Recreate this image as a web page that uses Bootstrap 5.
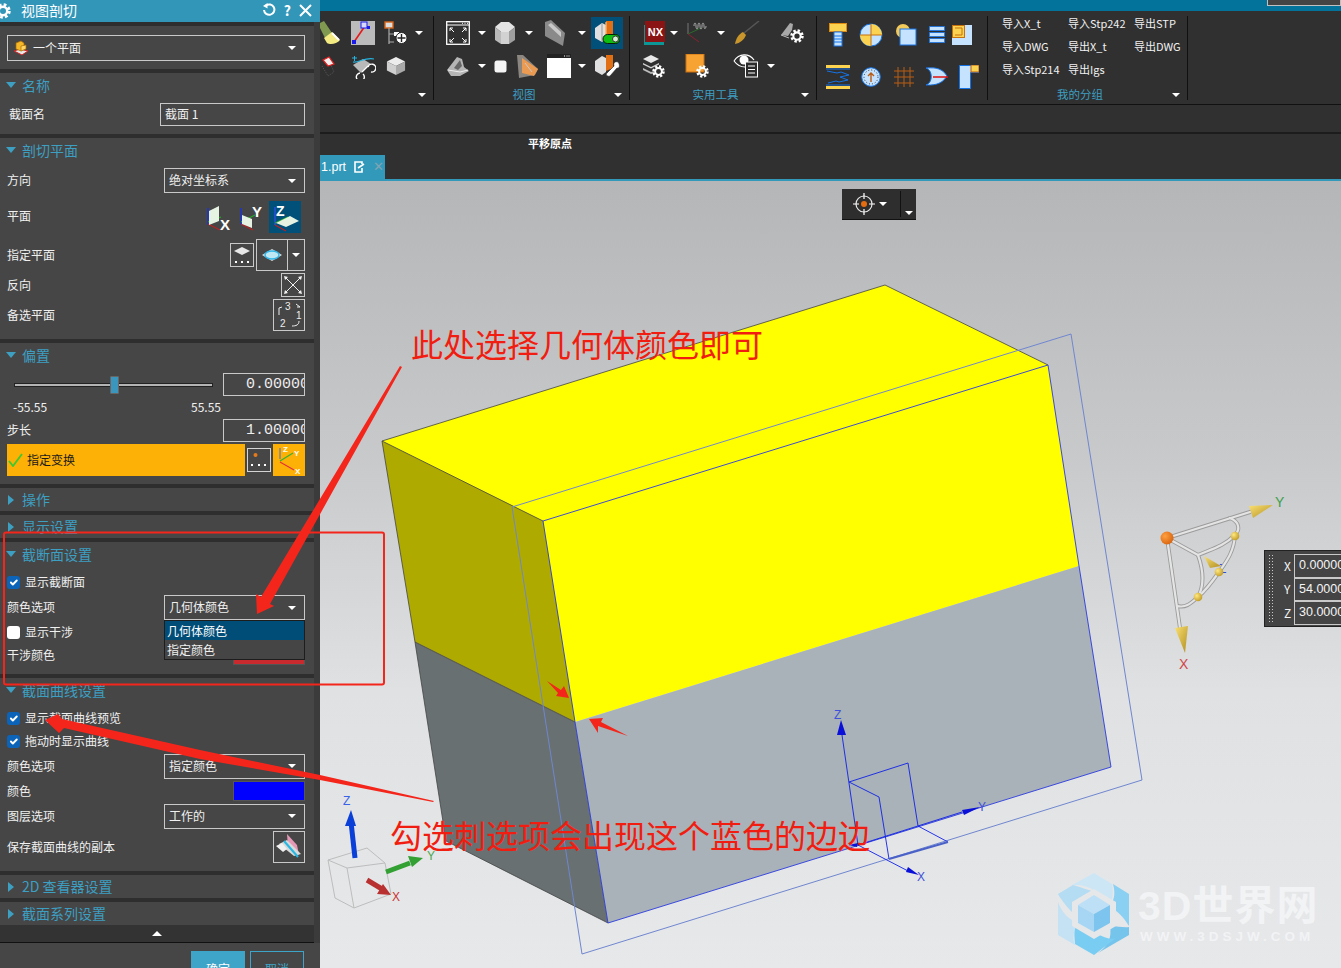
<!DOCTYPE html>
<html lang="zh-CN">
<head>
    <meta charset="UTF-8">
    <title>视图剖切</title>
    <link href="https://cdn.jsdelivr.net/npm/bootstrap@5.3.0/dist/css/bootstrap.min.css" rel="stylesheet">
    <style>
        body { height: 968px; overflow: hidden; background: #2e2e2e; color: #f0f0f0; font: 12px/1.2 "Noto Sans CJK SC", "Liberation Sans", sans-serif; }
        .app { width: 1341px; height: 968px; overflow: hidden; }
        /* left dialog */
        .dlg { width: 320px; flex-shrink: 0; background: #2e2e2e; border-right: 6px solid #3b3b3b; }
        .dlg > * { flex-shrink: 0; }
        .dlg-title { height: 22px; margin-right: -6px; background: #3296b9; font-size: 14px; color: #fff; padding-left: 21px; padding-bottom: 1px; }
        .dlg-gear { left: -6px; top: 3px; }
        .grp { background: #464646; padding: 0 9px 0 7px; flex-shrink: 0; }
        .g1 { height: 43px; padding-top: 9px; }
        .g2 { height: 61px; }
        .g3 { height: 201px; }
        .g4 { height: 141px; }
        .gc { height: 23px; }
        .g5 { height: 132px; }
        .g6 { height: 193px; }
        .gh { height: 26px; font-size: 14px; color: #3d9fc2; margin-left: -7px; padding-bottom: 2px; }
        .gc .gh { height: 23px; padding-bottom: 0; }
        .tr-cell { width: 22px; }
        .tri-d { width: 0; height: 0; border: 5px solid transparent; border-top: 6px solid #3d9fc2; border-bottom: 0; }
        .tri-r { width: 0; height: 0; border: 5px solid transparent; border-left: 6px solid #3d9fc2; border-right: 0; }
        .rw { display: flex; align-items: center; justify-content: space-between; }
        .r14 { height: 14px; } .r18 { height: 18px; } .r20 { height: 20px; } .r22 { height: 22px; } .r23 { height: 23px; }
        .r26 { height: 26px; } .r28 { height: 28px; } .r30 { height: 30px; } .r31 { height: 31px; } .r32 { height: 32px; }
        .r33 { height: 33px; } .r38 { height: 38px; } .r39 { height: 39px; }
        .lbl-in { padding-left: 2px; }
        .sel { flex-shrink: 0; height: 25px; width: 141px; border: 1px solid #c9c9c9; padding: 0 4px; }
        .sel-wide { width: 298px; height: 26px; padding-left: 5px; }
        .inp { height: 23px; width: 145px; border: 1px solid #c9c9c9; padding: 0 4px; }
        .num { width: 82px; height: 23px; border: 1px solid #c9c9c9; font: 15px/21px "Liberation Mono", monospace; overflow: hidden; white-space: nowrap; padding-left: 22px; color: #eee; }
        .step-row { padding-top: 3px; }
        .cr { width: 0; height: 0; border: 4px solid transparent; border-top: 4px solid #fff; border-bottom: 0; display: inline-block; }
        .opt-menu { --bs-dropdown-min-width: 0; top: 24px; left: -1px; width: 141px; padding: 0; margin: 0; background: #454545; border: 1px solid #1d1d1d; border-radius: 0; font-size: 12px; }
        .opt-menu .dropdown-item { color: #f0f0f0; padding: 0 0 0 2px; height: 19px; line-height: 19px; }
        .opt-menu .dropdown-item.active { background: #004e78; color: #fff; }
        .ib { border: 1px solid #c9c9c9; }
        .ib24 { width: 24px; height: 24px; }
        .ib32 { width: 32px; height: 32px; }
        .ib-plane { width: 49px; height: 32px; }
        .ib-side { width: 17px; height: 30px; border-left: 1px solid #c9c9c9; }
        .ib-main { width: 31px; }
        .ic-sel { background: #00507a; width: 32px; height: 32px; }
        .pl-gap { gap: 2px; }
        .range-wrap { width: 199px; margin-left: 7px; }
        .nx-range { height: 18px; display: block; }
        .nx-range::-webkit-slider-runnable-track { height: 4px; background: #b4b4b4; border: 1px solid #222; border-radius: 0; }
        .nx-range::-webkit-slider-thumb { width: 9px; height: 18px; margin-top: -8px; background: #3a96bc; border: 1px solid #666; border-radius: 1px; }
        .rng-lbl { padding: 0 84px 0 6px; }
        .req { height: 32px; background: #fdb005; color: #1b1b1b; }
        .req-main { width: 238px; }
        .req-ck { margin: 0 4px 0 1px; flex-shrink: 0; }
        .req-btn { width: 24px; height: 24px; border: 1px solid #d4d4d4; background: #464646; }
        .req-axes { width: 32px; height: 32px; background: #fdb005; }
        .chk { width: 13px; height: 13px; margin: 0 5px 0 0; border-radius: 3px; background-color: #fff; border: 0; flex-shrink: 0; }
        .chk:checked { background-color: #0c64b8; }
        .swatch { width: 72px; height: 20px; border: 1px solid #555; }
        .sw-red { background: #c92a2e; }
        .sw-blue { background: #0000ff; }
        .more-bar { height: 18px; background: #333; border-bottom: 1px solid #111; }
        .tri-u { width: 0; height: 0; border: 5px solid transparent; border-bottom: 5px solid #fff; border-top: 0; }
        .dlg-foot { padding: 8px 16px 0 0; gap: 5px; background: #464646; flex-grow: 1; margin-right: -6px; }
        .nx-btn { width: 54px; height: 30px; border-radius: 0; font-size: 12px; padding: 6px 0 0; color: #3fa5c8; border: 1px solid #3fa5c8; background: transparent; }
        .nx-btn-on { background: #3fa5c8; color: #fff; }
        /* ribbon */
        .main-col { width: 1021px; }
        .top-strip { height: 11px; background: #04739c; }
        .top-box { right: 0; top: -1px; width: 74px; height: 7px; border: 1px solid #c0c0c0; background: #444; }
        .ribbon { height: 93px; background: #303030; padding-top: 5px; }
        .rb-g { height: 84px; border-right: 1px solid #101010; flex-shrink: 0; }
        .rg1 { width: 114px; }
        .rg2 { width: 196px; padding-left: 6px; }
        .rg3 { width: 187px; padding-left: 6px; }
        .rg4 { width: 171px; }
        .rg5 { width: 200px; padding-left: 14px; }
        .rr1 { height: 33px; }
        .rr2 { height: 34px; }
        .rr3 { height: 42px; }
        .rr4 { height: 38px; }
        .rb-lbl { height: 24px; font-size: 11.5px; color: #3d9fc2; padding-right: 7px; margin-left: -6px; }
        .rg1 .rb-lbl { margin-left: 0; }
        .rg5 .rb-lbl { margin-left: -14px; }
        .rb-grid { display: grid; grid-template-columns: 66px 66px 66px; grid-auto-rows: 23px; height: 71px; margin-top: -4px; font-size: 11px; align-items: center; white-space: nowrap; }
        .cl { display: flex; justify-content: center; align-items: center; flex-shrink: 0; height: 100%; }
        .clip { overflow: hidden; }
        .c6 { width: 6px; } .c8 { width: 8px; } .c12 { width: 12px; } .c14 { width: 14px; } .c16 { width: 16px; } .c20 { width: 20px; }
        .c22 { width: 22px; } .c24 { width: 24px; } .c30 { width: 30px; } .c34 { width: 34px; } .c36 { width: 36px; } .c38 { width: 38px; }
        .c40 { width: 40px; } .c42 { width: 42px; } .c44 { width: 44px; } .c46 { width: 46px; } .c54 { width: 54px; }
        .bar-line { height: 1px; background: #111; }
        .bar-a { height: 27px; background: #303030; }
        .bar-b { height: 2px; background: #1c1c1c; }
        .tabs-row { height: 45px; background: #303030; }
        .snap-lbl { left: 208px; top: 3px; font-weight: 700; font-size: 11px; color: #fff; }
        .prt-tab { left: 0; bottom: 0; width: 65px; height: 24px; background: #3399bb; font-size: 12.5px; font-family: "Liberation Sans", sans-serif; color: #fff; padding-left: 1px; }
        .tab-x { font-size: 13px; color: #7fa4b2; }
        .tab-line { height: 2px; background: #3399bb; }
        /* viewport */
        .viewport { background: linear-gradient(#b5b6b8, #c8c9cb 35%, #e0e1e3 65%, #e7e8ea); }
        .canvas3d { position: absolute; left: 0; top: 0; }
        .view-tb { position: absolute; left: 522px; top: 8px; width: 74px; height: 31px; background: #2e2e2e; border-bottom: 1px solid #111; }
        .tb-ic { width: 58px; gap: 3px; padding-left: 10px; }
        .tb-side { width: 16px; border-left: 1px solid #111; height: 26px; align-self: center; padding-top: 13px; text-align: center; line-height: 1; }
        .coords { position: absolute; left: 944px; top: 369px; width: 90px; height: 77px; background: #444; border: 1px solid #222; padding: 3px 0 0 29px; font-size: 12px; color: #f4f4f4; }
        .coords-grip { position: absolute; left: 3px; top: 3px; bottom: 3px; width: 7px; background-image: radial-gradient(#c8c8c8 40%, transparent 45%); background-size: 3px 3px; }
        .crow { height: 23.5px; }
        .clbl { position: absolute; left: 19px; }
        .cval { border: 1px solid #c9c9c9; height: 23.5px; width: 70px; padding: 3px 4px; white-space: nowrap; overflow: hidden; font-family: "Liberation Sans", sans-serif; font-size: 12.5px; }
        .wm-a { position: absolute; left: 818px; top: 705px; font: 700 41px/1 "Liberation Sans", "Noto Sans CJK SC", sans-serif; color: #f2f3f5; letter-spacing: 1px; white-space: nowrap; }
        .wm-b { position: absolute; left: 820px; top: 749px; font: 700 13.5px/1 "Liberation Sans", sans-serif; color: #f2f3f5; letter-spacing: 4px; white-space: nowrap; }
        /* annotations */
        .notes-layer { position: absolute; left: 0; top: 0; pointer-events: none; }
        .note { position: absolute; font: 400 32px/1 "Noto Sans CJK SC", sans-serif; color: #f11d10; white-space: nowrap; }
        .note-a { left: 411px; top: 327px; }
        .note-b { left: 390px; top: 818px; }
    </style>
</head>
<body>
<svg width="0" height="0" class="position-absolute">
    <defs>
        <symbol id="gear" viewBox="0 0 16 16">
            <circle cx="8" cy="8" r="6" fill="none" stroke="#fff" stroke-width="3.4" stroke-dasharray="2.6 2.1"/>
            <circle cx="8" cy="8" r="4.2" fill="none" stroke="#fff" stroke-width="2.4"/>
        </symbol>
        <linearGradient id="cone" x1="0" y1="0" x2="1" y2="1">
            <stop offset="0" stop-color="#fbe070"/><stop offset="1" stop-color="#b08f22"/>
        </linearGradient>
        <radialGradient id="orb" cx=".35" cy=".35" r=".8">
            <stop offset="0" stop-color="#ffa040"/><stop offset="1" stop-color="#d25c08"/>
        </radialGradient>
        <radialGradient id="ball" cx=".35" cy=".35" r=".8">
            <stop offset="0" stop-color="#ffe880"/><stop offset="1" stop-color="#b8901a"/>
        </radialGradient>
    </defs>
</svg>

<div class="app d-flex position-relative">
    <!-- dialog -->
    <div class="dlg d-flex flex-column">
        <div class="dlg-title d-flex align-items-center justify-content-between position-relative">
            <svg class="position-absolute dlg-gear" width="18" height="16" viewBox="0 0 16 16"><use href="#gear"/></svg>
            <span>视图剖切</span>
            <span class="d-flex align-items-center">
                <svg width="14" height="14" viewBox="0 0 14 14"><path d="M4 2.5A5.2 5.2 0 1 1 2 7" fill="none" stroke="#fff" stroke-width="2"/><path d="M5.5 0v5.5L1 3z" fill="#fff"/></svg>
                <span class="mx-2 fw-bold">?</span>
                <svg class="me-2" width="13" height="13" viewBox="0 0 13 13"><path d="M1 1l11 11M12 1L1 12" stroke="#fff" stroke-width="2"/></svg>
            </span>
        </div>
        <div class="d-flex flex-column gap-1 pt-1">
            <div class="grp g1">
                <div class="sel sel-wide d-flex align-items-center justify-content-between">
                    <span class="d-flex align-items-center gap-1">
                        <svg width="16" height="16" viewBox="0 0 16 16"><path d="M1 11l6-2 8 2-6 4z" fill="#e8e8e8" stroke="#c22" stroke-width="1"/><path d="M3 3l5-2 3 2v6l-3 2-5-2z" fill="#f5b82a" stroke="#a86c00" stroke-width=".7"/><path d="M8 6l5-1v4l-5 2z" fill="#ffd665" stroke="#a86c00" stroke-width=".7"/></svg>
                        一个平面
                    </span>
                    <span class="cr me-1"></span>
                </div>
            </div>
            <div class="grp g2">
                <div class="gh d-flex align-items-center"><span class="tr-cell d-flex justify-content-center"><span class="tri-d"></span></span>名称</div>
                <div class="rw r31"><span class="lbl-in">截面名</span><span class="inp d-flex align-items-center">截面 1</span></div>
            </div>
            <div class="grp g3">
                <div class="gh d-flex align-items-center"><span class="tr-cell d-flex justify-content-center"><span class="tri-d"></span></span>剖切平面</div>
                <div class="rw r33"><span>方向</span><span class="sel d-flex align-items-center justify-content-between">绝对坐标系<span class="cr me-1"></span></span></div>
                <div class="rw r39"><span>平面</span>
                    <span class="d-flex align-items-center pe-1 pl-gap">
                        <svg width="30" height="32" viewBox="0 0 30 32"><path d="M3 7v17" stroke="#1a33d8" stroke-width="1.4"/><path d="M3 23l12 6" stroke="#b22" stroke-width="1.2"/><path d="M3 21l13-5" stroke="#2a2" stroke-width="1.2"/><path d="M4 10l10-5v15l-10 4z" fill="#e6f3e2"/><text x="15" y="29" font-size="15" font-weight="700" fill="#fff" font-family="Liberation Sans">X</text></svg>
                        <svg width="30" height="32" viewBox="0 0 30 32"><path d="M4 7v17" stroke="#1a33d8" stroke-width="1.4"/><path d="M4 23l12 6" stroke="#b22" stroke-width="1.2"/><path d="M4 21l14-7" stroke="#2a2" stroke-width="1.2"/><path d="M5 14l10 4v9l-10-4z" fill="#e6f3e2"/><text x="15" y="16" font-size="15" font-weight="700" fill="#fff" font-family="Liberation Sans">Y</text></svg>
                        <span class="ic-sel d-flex">
                            <svg width="32" height="32" viewBox="0 0 32 32"><path d="M6 6v18" stroke="#2a4de8" stroke-width="1.4"/><path d="M6 24l11 6" stroke="#b22" stroke-width="1.2"/><path d="M6 22l13-6" stroke="#2a2" stroke-width="1.2"/><path d="M7 22l14-7 9 5-13 6z" fill="#e6f3e2"/><text x="7" y="15" font-size="14" font-weight="700" fill="#fff" font-family="Liberation Sans">Z</text></svg>
                        </span>
                    </span>
                </div>
                <div class="rw r38"><span>指定平面</span>
                    <span class="d-flex align-items-center pl-gap">
                        <span class="ib ib24 d-flex"><svg width="22" height="22" viewBox="0 0 22 22"><path d="M11 3l8 4-8 4-8-4z" fill="#e8e8e8"/><path d="M4 17h2v2H4zM10 17h2v2h-2zM16 17h2v2h-2z" fill="#fff"/></svg></span>
                        <span class="ib ib-plane d-flex align-items-center">
                            <span class="ib-main d-flex justify-content-center"><svg width="22" height="14" viewBox="0 0 22 14"><path d="M1 7l10-6 10 6-10 6z" fill="#ddd"/><ellipse cx="11" cy="7" rx="7" ry="4" fill="#bfe8f5" stroke="#2eb6e8" stroke-width="1.4"/></svg></span>
                            <span class="ib-side d-flex align-items-center justify-content-center"><span class="cr"></span></span>
                        </span>
                    </span>
                </div>
                <div class="rw r22"><span>反向</span>
                    <span class="ib ib24 d-flex"><svg width="22" height="22" viewBox="0 0 22 22"><path d="M3 3l16 16M19 3L3 19" stroke="#f0f0f0" stroke-width="1"/><path d="M2 2l4 1-3 3zM20 2l-4 1 3 3zM2 20l4-1-3-3zM20 20l-4-1 3-3z" fill="#f0f0f0"/></svg></span>
                </div>
                <div class="rw r38"><span>备选平面</span>
                    <span class="ib ib32 d-flex"><svg width="30" height="30" viewBox="0 0 30 30"><g fill="#eee" font-size="10" font-family="Liberation Sans"><text x="11" y="10">3</text><text x="22" y="19">1</text><text x="6" y="27">2</text></g><path d="M5 15V8l3-1M22 4l4 3-3 0M25 21c0 4-3 5-7 5" fill="none" stroke="#eee" stroke-width="1"/></svg></span>
                </div>
            </div>
            <div class="grp g4">
                <div class="gh d-flex align-items-center"><span class="tr-cell d-flex justify-content-center"><span class="tri-d"></span></span>偏置</div>
                <div class="rw r31">
                    <span class="range-wrap"><input type="range" class="form-range nx-range" min="-55.55" max="55.55" value="0"></span>
                    <span class="num">0.00000</span>
                </div>
                <div class="rw r14 rng-lbl"><span>-55.55</span><span>55.55</span></div>
                <div class="rw r30 step-row"><span>步长</span><span class="num">1.00000</span></div>
                <div class="d-flex justify-content-between">
                    <div class="req req-main d-flex align-items-center">
                        <svg class="req-ck" width="15" height="14" viewBox="0 0 15 14"><path d="M1 8l4 5L14 1" fill="none" stroke="#3ec832" stroke-width="1.8"/></svg>
                        指定变换
                    </div>
                    <span class="d-flex align-items-center"><span class="req-btn d-flex"><svg width="22" height="22" viewBox="0 0 22 22"><circle cx="7.5" cy="6" r="2" fill="#e57a1c"/><path d="M3 15h2v2H3zM10 15h2v2h-2zM16 15h2v2h-2z" fill="#fff"/></svg></span></span>
                    <span class="req-axes d-flex"><svg width="32" height="32" viewBox="0 0 32 32"><path d="M7 15V4" stroke="#3a6de0" stroke-width="1"/><path d="M7 17l13-8" stroke="#35b335" stroke-width="1.2"/><path d="M7 18l14 8" stroke="#e2343a" stroke-width="1.2"/><g font-size="8" font-weight="700" fill="#fff" font-family="Liberation Sans"><text x="10" y="8">Z</text><text x="21" y="12">Y</text><text x="22" y="30">X</text></g></svg></span>
                </div>
            </div>
            <div class="grp gc"><div class="gh d-flex align-items-center"><span class="tr-cell d-flex justify-content-center"><span class="tri-r"></span></span>操作</div></div>
            <div class="grp gc"><div class="gh d-flex align-items-center"><span class="tr-cell d-flex justify-content-center"><span class="tri-r"></span></span>显示设置</div></div>
            <div class="grp g5">
                <div class="gh d-flex align-items-center"><span class="tr-cell d-flex justify-content-center"><span class="tri-d"></span></span>截断面设置</div>
                <div class="d-flex align-items-center r28"><input class="form-check-input chk" type="checkbox" checked>显示截断面</div>
                <div class="rw r23"><span>颜色选项</span>
                    <span class="sel d-flex align-items-center justify-content-between position-relative">几何体颜色<span class="cr me-1"></span>
                        <span class="dropdown-menu show opt-menu">
                            <span class="dropdown-item active">几何体颜色</span>
                            <span class="dropdown-item">指定颜色</span>
                        </span>
                    </span>
                </div>
                <div class="d-flex align-items-center r26"><input class="form-check-input chk" type="checkbox">显示干涉</div>
                <div class="rw r20"><span>干涉颜色</span><span class="swatch sw-red"></span></div>
            </div>
            <div class="grp g6">
                <div class="gh d-flex align-items-center"><span class="tr-cell d-flex justify-content-center"><span class="tri-d"></span></span>截面曲线设置</div>
                <div class="d-flex align-items-center r28"><input class="form-check-input chk" type="checkbox" checked>显示截面曲线预览</div>
                <div class="d-flex align-items-center r18"><input class="form-check-input chk" type="checkbox" checked>拖动时显示曲线</div>
                <div class="rw r32"><span>颜色选项</span><span class="sel d-flex align-items-center justify-content-between">指定颜色<span class="cr me-1"></span></span></div>
                <div class="rw r18"><span>颜色</span><span class="swatch sw-blue"></span></div>
                <div class="rw r32"><span>图层选项</span><span class="sel d-flex align-items-center justify-content-between">工作的<span class="cr me-1"></span></span></div>
                <div class="rw r30"><span>保存截面曲线的副本</span>
                    <span class="ib ib32 d-flex"><svg width="30" height="30" viewBox="0 0 30 30"><path d="M13 2l10 11 2 10-11-8z" fill="#e498b6"/><path d="M5 12l8-4 14 14-7 2z" fill="#d9d9d9"/><path d="M10 9l14 16" stroke="#26b7e2" stroke-width="2"/><path d="M2 14l6-3 5 6-4 3z" fill="#f0f0f0"/></svg></span>
                </div>
            </div>
            <div class="grp gc"><div class="gh d-flex align-items-center"><span class="tr-cell d-flex justify-content-center"><span class="tri-r"></span></span>2D 查看器设置</div></div>
            <div class="grp gc"><div class="gh d-flex align-items-center"><span class="tr-cell d-flex justify-content-center"><span class="tri-r"></span></span>截面系列设置</div></div>
        </div>
        <div class="more-bar d-flex align-items-center justify-content-center"><span class="tri-u"></span></div>
        <div class="dlg-foot d-flex justify-content-end">
            <button class="btn nx-btn nx-btn-on">确定</button>
            <button class="btn nx-btn">取消</button>
        </div>
    </div>

    <!-- main area -->
    <div class="main-col d-flex flex-column">
        <div class="top-strip position-relative"><span class="top-box position-absolute"></span></div>
        <div class="ribbon d-flex">
            <div class="rb-g rg1">
                <div class="d-flex rr1">
                    <span class="cl c22 clip"><svg width="22" height="24" viewBox="0 0 22 24"><path d="M-2 3L4 0l8 12-7 5z" fill="#7f9a50"/><path d="M4 17l8-6 8 8c-3 4-10 5-13 3z" fill="#f3ea82"/><path d="M12 12l7 7" stroke="#fff" stroke-width="2"/></svg></span>
                    <span class="cl c42"><svg width="24" height="24" viewBox="0 0 24 24"><rect width="24" height="24" fill="#bbb"/><path d="M3 21L14 5" stroke="#e81818" stroke-width="1.6"/><rect x="10" y="1" width="6" height="6" fill="#d7d7ff" stroke="#1a1ae8"/><rect x="1" y="19" width="4" height="4" fill="#1a1ae8"/><rect x="16" y="5" width="3" height="3" fill="#1a1ae8"/></svg></span>
                    <span class="cl c24"><svg width="24" height="24" viewBox="0 0 24 24"><rect x="1" y="1" width="8" height="6" fill="#ddd" stroke="#d8641a" stroke-width="1.4"/><path d="M5 7v16M5 13h6M5 21h5" stroke="#aaa" stroke-width="1.2"/><rect x="10" y="11" width="5" height="4" fill="#fff"/><circle cx="17.5" cy="17" r="5.5" fill="#fff" stroke="#222"/><path d="M17.5 13v8M13.5 17h8" stroke="#222" stroke-width="1.4"/></svg></span>
                    <span class="cl c22"><span class="cr"></span></span>
                </div>
                <div class="d-flex rr2">
                    <span class="cl c20 clip"><svg width="20" height="22" viewBox="0 0 20 22"><path d="M3 5l6-3 5 7-6 2z" fill="#f4f0ef" stroke="#e02020" stroke-width="1.2"/><path d="M2 11l6 10 6-4-3-7" fill="none" stroke="#555" stroke-dasharray="1.2 1.2"/></svg></span>
                    <span class="cl c46"><svg width="26" height="26" viewBox="0 0 26 26"><path d="M2 5h5M4.500 3v5" stroke="#25b4e0" stroke-width="1"/><path d="M3 12l10-6 8 5-10 9z" fill="#b9b9b9"/><path d="M3 9c6 1 12-5 21-3" fill="none" stroke="#25b4e0" stroke-width="1.1"/><path d="M13 21a4 4 0 1 1 -3-1M18 14a4 4 0 1 1 3 5" fill="#2e2e2e" stroke="#fff" stroke-width="1.4"/><path d="M12 19l6-6" stroke="#fff" stroke-width="1.300"/></svg></span>
                    <span class="cl c20"><svg width="22" height="22" viewBox="0 0 22 22"><path d="M11 1l10 5-10 5L1 6z" fill="#ececec"/><path d="M1 6l10 5v10L1 16z" fill="#cfcfcf"/><path d="M21 6L11 11v10l10-5z" fill="#a9a9a9"/></svg></span>
                </div>
                <div class="rb-lbl d-flex align-items-center"><span class="ms-auto cr"></span></div>
            </div>
            <div class="rb-g rg2">
                <div class="d-flex rr1">
                    <span class="cl c36"><svg width="24" height="24" viewBox="0 0 24 24"><rect x=".7" y=".7" width="22.6" height="22.600" fill="none" stroke="#fff" stroke-width="1.3"/><path d="M1 4h22" stroke="#fff"/><path d="M16 2.300h1M18.500 2.300h1M21 2.300h1" stroke="#fff"/><path d="M4 7l4 4M4 7h3M4 7v3M20 7l-4 4M20 7h-3M20 7v3M4 21l4-4M4 21h3M4 21v-3M20 21l-4-4M20 21h-3M20 21v-3" stroke="#fff" fill="none"/></svg></span>
                    <span class="cl c12"><span class="cr"></span></span>
                    <span class="cl c34"><svg width="22" height="24" viewBox="0 0 22 24"><path d="M1 6l6-5h8l6 5-6 5H7z" fill="#e4e4e4"/><path d="M1 6l6 5v12l-6-4z" fill="#bbb"/><path d="M7 11h8v12H7z" fill="#d2d2d2"/><path d="M15 11l6-5v13l-6 4z" fill="#9f9f9f"/></svg></span>
                    <span class="cl c14"><span class="cr"></span></span>
                    <span class="cl c38"><svg width="22" height="26" viewBox="0 0 22 26"><path d="M1 2l6-2 14 13-2 13L1 16z" fill="#8a8a8a"/><path d="M4 5l13 12v-5L7 3z" fill="#c9c9c9"/></svg></span>
                    <span class="cl c16"><span class="cr"></span></span>
                    <span class="cl c34"><span class="ic-sel d-flex justify-content-center align-items-center"><svg width="26" height="26" viewBox="0 0 26 26"><path d="M1 8l7-5 4 2v14l-4 3-7-4z" fill="#e0e0e0"/><path d="M8 3v19" stroke="#999"/><path d="M12 1h7v14h-7z" fill="#e36f14"/><path d="M12 2v17" stroke="#ffb066" stroke-width="1.400"/><rect x="9" y="14.500" width="17" height="9" rx="4.500" fill="#10c010" stroke="#052005"/><circle cx="21.500" cy="19" r="3" fill="#d8f0d8" stroke="#333"/></svg></span></span>
                </div>
                <div class="d-flex rr2">
                    <span class="cl c36"><svg width="24" height="20" viewBox="0 0 24 20"><path d="M1 14L11 1l5 2 2 8 5 4-9 5H5z" fill="#b5b5b5"/><path d="M8 12l6-8 2 6-4 4z" fill="#666"/><path d="M2 14l12 2 8-2" fill="none" stroke="#eee"/></svg></span>
                    <span class="cl c12"><span class="cr"></span></span>
                    <span class="cl c24"><svg width="13" height="13" viewBox="0 0 13 13"><rect x=".5" y=".5" width="12" height="12" rx="2.500" fill="#f5f5f5"/></svg></span>
                    <span class="cl c30"><svg width="22" height="24" viewBox="0 0 22 24"><path d="M1 1l6 0 15 14-3 6-16 3z" fill="#8b8680"/><path d="M6 4l16 11-4 7-12-3z" fill="#eb9a52"/><path d="M9 9l7 9" stroke="#c9c9c9"/></svg></span>
                    <span class="cl c34"><svg width="24" height="24" viewBox="0 0 24 24"><rect width="24" height="24" fill="#fff"/><rect width="24" height="4" fill="#222"/><path d="M17 2h1M19.500 2h1M21.500 2h1" stroke="#fff"/></svg></span>
                    <span class="cl c12"><span class="cr"></span></span>
                    <span class="cl c38"><svg width="26" height="24" viewBox="0 0 26 24"><path d="M1 7l7-5 4 2v14l-4 3-7-4z" fill="#e0e0e0"/><path d="M12 1h7v13l-7 3z" fill="#e36f14"/><path d="M24 8c-3-1-5 1-4 4l-7 7c-2 2 1 4 3 3l7-8c3 1 3-4 1-6z" fill="#fff" stroke="#222" stroke-width=".6"/></svg></span>
                </div>
                <div class="rb-lbl d-flex align-items-center"><span class="ms-auto">视图</span><span class="ms-auto cr"></span></div>
            </div>
            <div class="rb-g rg3">
                <div class="d-flex rr1">
                    <span class="cl c34"><svg width="24" height="24" viewBox="0 0 24 24"><path d="M1 4h2v20h20v-3H4V4z" fill="#0c9696"/><rect x="4" y="0" width="21" height="21" fill="#8a1414"/><text x="14.500" y="15" text-anchor="middle" font-size="11" font-weight="700" fill="#fff" font-family="Liberation Sans">NX</text></svg></span>
                    <span class="cl c8"><span class="cr"></span></span>
                    <span class="cl c40"><svg width="24" height="22" viewBox="0 0 24 22"><path d="M2 1v11" stroke="#777"/><path d="M2 12l13-6" stroke="#2a6a2a"/><path d="M2 12l11 8" stroke="#8a2030"/><path d="M8 4c0-4 2-4 2 0s2 4 2 0 2-4 2 0 2 4 2 0 2-4 2 0 2 3 2 0" fill="none" stroke="#a9a9a9"/></svg></span>
                    <span class="cl c6"><span class="cr"></span></span>
                    <span class="cl c46"><svg width="26" height="24" viewBox="0 0 26 24"><path d="M10 12L25 0" stroke="#555" stroke-width="1.600"/><path d="M1 23c1-6 4-10 8-12l3 3c-2 5-6 8-11 9z" fill="#c9962c"/></svg></span>
                    <span class="cl c44"><svg width="24" height="22" viewBox="0 0 24 22"><path d="M1 13L10 1l3 1-1 6-4 6z" fill="#a8a8a8"/><path d="M1 13l8 3" stroke="#bbb"/><use href="#gear" x="10" y="7" width="14" height="14"/></svg></span>
                </div>
                <div class="d-flex rr2">
                    <span class="cl c34"><svg width="24" height="24" viewBox="0 0 24 24"><path d="M2 5l8-4 8 4-8 4z" fill="#e7e7e7"/><path d="M2 9l8 4 8-4v1.500l-8 4-8-4z" fill="#d2d2d2"/><path d="M2 14l8 4 3-1v2l-3 1-8-4z" fill="#bbb"/><use href="#gear" x="11" y="11" width="13" height="13"/></svg></span>
                    <span class="cl c54"><svg width="24" height="24" viewBox="0 0 24 24"><rect x="1" y="0" width="18" height="18" fill="#f7a333" stroke="#cc6f10"/><use href="#gear" x="11" y="11" width="13" height="13"/></svg></span>
                    <span class="cl c44"><svg width="26" height="24" viewBox="0 0 26 24"><path d="M1 7C6-1 16-1 21 6" fill="none" stroke="#fff" stroke-width="1.200"/><path d="M1 7c3 4 7 6 11 6" fill="none" stroke="#fff" stroke-width="1.200"/><circle cx="11" cy="6" r="4.500" fill="#fff"/><rect x="12.500" y="8" width="12" height="15" fill="#2c2c2c" stroke="#fff"/><path d="M15 12h7M15 15.500h7M15 19h7" stroke="#fff"/></svg></span>
                    <span class="cl c6"><span class="cr"></span></span>
                </div>
                <div class="rb-lbl d-flex align-items-center"><span class="ms-auto">实用工具</span><span class="ms-auto cr"></span></div>
            </div>
            <div class="rb-g rg4">
                <div class="d-flex rr3 pb-1 align-items-center">
                    <span class="cl c42"><svg width="18" height="24" viewBox="0 0 18 24"><rect x=".5" y=".5" width="17" height="8" fill="#fbd350" stroke="#e08a10"/><rect x="5" y="9" width="8" height="14" fill="#c5e2ff" stroke="#1473e6"/><path d="M5 13h8M5 16h8M5 19h8" stroke="#1473e6"/></svg></span>
                    <span class="cl c24"><svg width="24" height="24" viewBox="0 0 24 24"><circle cx="12" cy="12" r="11" fill="#c5e2ff" stroke="#1473e6"/><path d="M12 12V1a11 11 0 0 1 11 11z" fill="#fbd350"/><path d="M12 12v11a11 11 0 0 1-11-11z" fill="#fbd350"/><path d="M12 1v22M1 12h22" stroke="#c8700c"/></svg></span>
                    <span class="cl c46"><svg width="22" height="22" viewBox="0 0 22 22"><circle cx="8" cy="7" r="7" fill="#f3c95a"/><rect x="5" y="5" width="16" height="16" fill="#c5e2ff" stroke="#1473e6"/></svg></span>
                    <span class="cl c16"><svg width="20" height="22" viewBox="0 0 20 22"><rect x=".5" y=".5" width="19" height="5" fill="#c5e2ff" stroke="#1473e6"/><rect x=".5" y="8" width="19" height="5" fill="#c5e2ff" stroke="#1473e6"/><rect x=".5" y="15.500" width="19" height="5" fill="#c5e2ff" stroke="#1473e6"/></svg></span>
                    <span class="cl c34"><svg width="20" height="20" viewBox="0 0 20 20"><path d="M0 0h20v20H0z" fill="#c5e2ff"/><rect x=".5" y=".5" width="12" height="12" fill="#fbd350" stroke="#c8700c"/><path d="M3 3h7v7H3" fill="none" stroke="#c8700c"/></svg></span>
                </div>
                <div class="d-flex rr4 align-items-center">
                    <span class="cl c42"><svg width="24" height="24" viewBox="0 0 24 24"><rect width="24" height="3" fill="#fbd350"/><rect y="21" width="24" height="3" fill="#fbd350"/><path d="M0 4h24M0 20h24" stroke="#1473e6"/><path d="M1 6l10 2 4-1 8 3-9 2 8 3-9 2-3-1-8 2" fill="none" stroke="#1473e6"/></svg></span>
                    <span class="cl c24"><svg width="20" height="20" viewBox="0 0 20 20"><circle cx="10" cy="10" r="9.300" fill="#c5e2ff" stroke="#1473e6"/><circle cx="10" cy="10" r="7" fill="none" stroke="#333" stroke-dasharray="1 2"/><path d="M10 15V6M7 9l3-3 3 3" stroke="#b85c12" stroke-width="1.400" fill="none"/></svg></span>
                    <span class="cl c42"><svg width="20" height="20" viewBox="0 0 20 20"><path d="M4 0v20M10 0v20M16 0v20M0 4h20M0 10h20M0 16h20" stroke="#b85c12"/></svg></span>
                    <span class="cl c24"><svg width="22" height="20" viewBox="0 0 22 20"><path d="M0 1c5 0 15-2 21 8-6 10-16 9-21 9 7-2 7-15 0-17z" fill="#c5e2ff" stroke="#1473e6"/><path d="M7 10h15" stroke="#e01010" stroke-width="1.500"/></svg></span>
                    <span class="cl c40"><svg width="20" height="24" viewBox="0 0 20 24"><path d="M.5.500h19v7h-8v16h-11z" fill="#c5e2ff" stroke="#1473e6"/><rect x="12" y="0" width="8" height="7" fill="#fbd350" stroke="#b85c12"/></svg></span>
                </div>
            </div>
            <div class="rb-g rg5">
                <div class="rb-grid">
                    <span>导入X_t</span><span>导入Stp242</span><span>导出STP</span>
                    <span>导入DWG</span><span>导出X_t</span><span>导出DWG</span>
                    <span>导入Stp214</span><span>导出Igs</span><span></span>
                </div>
                <div class="rb-lbl d-flex align-items-center"><span class="ms-auto">我的分组</span><span class="ms-auto cr"></span></div>
            </div>
        </div>
        <div class="bar-line"></div>
        <div class="bar-a"></div>
        <div class="bar-b"></div>
        <div class="tabs-row position-relative">
            <span class="snap-lbl position-absolute">平移原点</span>
            <span class="prt-tab position-absolute d-flex align-items-center gap-2">1.prt
                <svg width="11" height="12" viewBox="0 0 11 12"><path d="M8 7v4H1V1h7v2" fill="none" stroke="#fff" stroke-width="1.600"/><path d="M4 7l6-4" stroke="#fff" stroke-width="1.600"/></svg>
                <span class="tab-x">✕</span>
            </span>
        </div>
        <div class="tab-line"></div>
        <div class="viewport flex-grow-1 position-relative">
            <svg class="canvas3d" width="1021" height="787" viewBox="320 181 1021 787">
                <!-- block faces -->
                <polygon points="382,441 885,285 1048,365 543,521" fill="#ffff00"/>
                <polygon points="543,521 1048,365 1079,566 575,722" fill="#ffff00"/>
                <polygon points="575,722 1079,566 1111,767 608,923" fill="#a8b2b8"/>
                <polygon points="382,441 543,521 575,722 415,642" fill="#aeaa00"/>
                <polygon points="415,642 575,722 608,923 446,841" fill="#687072"/>
                <path d="M382 441L885 285L1048 365M382 441L543 521M382 441L415 642L446 841L608 923M415 642L575 722" fill="none" stroke="#444" stroke-width=".8"/>
                <!-- section plane -->
                <polygon points="512,507 1071,334 1142,780 582,954" fill="none" stroke="#6f86d0" stroke-width="1"/>
                <!-- section curves -->
                <path d="M543 521L1048 365L1079 566L1111 767L608 923L575 722L543 521" fill="none" stroke="#2a3ae0" stroke-width=".9"/>
                <!-- csys on the plane -->
                <path d="M842 735L858 845M849 782L908 763L918 826L948 842M849 782L879 797L889 859M858 845L910 872M858 845L962 812" fill="none" stroke="#1020e8" stroke-width=".9"/>
                <path d="M889 859L948 842" stroke="#4a62c8" stroke-width="2"/>
                <path d="M841 720l-4 15 9 0zM919 875l-11-8 -2 5zM980 807l-18 3 2 5zM858 843l-9 2 8 2z" fill="#0a10d8"/>
                <g font-family="Liberation Sans" font-size="12" fill="#4050d8">
                    <text x="834" y="719">Z</text><text x="978" y="811">Y</text><text x="917" y="881">X</text>
                </g>
                <!-- small triad -->
                <g fill="none" stroke="#bdbdbd" stroke-width="1">
                    <path d="M328 860L367 848L385 863L347 868ZM328 860L335 898L354 908L347 868M354 908L391 894L385 863"/>
                </g>
                <path d="M355 858L351 822" stroke="#0a3fd8" stroke-width="5"/>
                <path d="M351 810l-6 16 11 0z" fill="#0a3fd8"/>
                <path d="M386 872L410 863" stroke="#32a032" stroke-width="5"/>
                <path d="M423 858l-15-2 4 11z" fill="#32a032"/>
                <path d="M367 880L382 889" stroke="#b83030" stroke-width="5"/>
                <path d="M391 895l-14-1 6-10z" fill="#b83030"/>
                <g font-family="Liberation Sans" font-size="12">
                    <text x="343" y="805" fill="#3a62e8">Z</text><text x="427" y="860" fill="#4aa84a">Y</text><text x="392" y="901" fill="#cc3333">X</text>
                </g>
                <!-- manipulator -->
                <text x="1219" y="573" font-family="Liberation Sans" font-size="12" fill="#2a4de8">Z</text>
                <g fill="none" stroke="#9b9b9b" stroke-width="4" stroke-linecap="round">
                    <path d="M1167 538L1250 512"/>
                    <path d="M1167 538L1180 628"/>
                    <path d="M1167 538L1198 555"/>
                    <path d="M1198 555C1212 549 1224 546 1235 535"/>
                    <path d="M1230 518C1240 522 1240 530 1235 535C1234 552 1226 562 1219 572C1212 582 1206 590 1198 597C1190 604 1186 608 1177 606"/>
                    <path d="M1198 555C1204 572 1204 586 1198 597"/>
                </g>
                <g fill="none" stroke="#e4e4e4" stroke-width="2.200" stroke-linecap="round">
                    <path d="M1167 538L1250 512"/>
                    <path d="M1167 538L1180 628"/>
                    <path d="M1167 538L1198 555"/>
                    <path d="M1198 555C1212 549 1224 546 1235 535"/>
                    <path d="M1230 518C1240 522 1240 530 1235 535C1234 552 1226 562 1219 572C1212 582 1206 590 1198 597C1190 604 1186 608 1177 606"/>
                    <path d="M1198 555C1204 572 1204 586 1198 597"/>
                </g>
                <path d="M1273 505L1249 506L1253 518Z" fill="url(#cone)"/>
                <path d="M1185 653L1175 628L1188 626Z" fill="url(#cone)"/>
                <path d="M1221 566L1204 556L1210 568Z" fill="url(#cone)"/>
                <circle cx="1167" cy="538" r="6.500" fill="url(#orb)"/>
                <circle cx="1235" cy="536" r="4.300" fill="url(#ball)"/>
                <circle cx="1219" cy="572" r="4.300" fill="url(#ball)"/>
                <circle cx="1198" cy="597" r="4.300" fill="url(#ball)"/>
                <g font-family="Liberation Sans" font-size="14">
                    <text x="1275" y="507" fill="#3aa04a">Y</text><text x="1179" y="669" fill="#d04848">X</text>
                </g>
                <!-- watermark logo -->
                <polygon points="1094,873 1129,894 1129,935 1094,955 1058,935 1058,894" fill="#e6e7e9"/>
                <path d="M1094 873L1112 884C1114 896 1112 902 1106 909L1092 889C1084 884 1072 885 1072 885Z" fill="#cde6f5"/>
                <path d="M1113 884L1129 894V926C1124 918 1116 908 1108 908C1114 902 1116 894 1113 884Z" fill="#8ad0f3"/>
                <path d="M1129 927V935L1098 953C1108 946 1112 938 1110 926C1118 926 1124 928 1129 927Z" fill="#74c4ec"/>
                <path d="M1094 955L1075 944C1074 934 1074 926 1076 918L1096 933C1104 938 1112 940 1116 938Z" fill="#79cdf2"/>
                <path d="M1058 935V902C1062 912 1068 920 1078 922C1074 930 1072 938 1075 945Z" fill="#c5e2f5"/>
                <path d="M1058 894L1073 885C1082 888 1090 890 1094 892C1084 892 1076 900 1072 912C1066 906 1060 898 1058 894Z" fill="#b4dcf3"/>
                <polygon points="1094,889 1116,902 1116,926 1094,939 1072,926 1072,902" fill="#e6e7e9"/>
                <polygon points="1094,895 1110,905 1094,914 1078,905" fill="#bde0f7"/>
                <polygon points="1078,905 1094,914 1094,932 1078,923" fill="#a6d6f4"/>
                <polygon points="1110,905 1094,914 1094,932 1110,923" fill="#7dc5ee"/>
            </svg>
            <div class="view-tb d-flex">
                <span class="tb-ic d-flex align-items-center">
                    <svg width="24" height="24" viewBox="0 0 24 24"><circle cx="12" cy="12" r="8" fill="none" stroke="#e8e8e8" stroke-width="1.200"/><circle cx="12" cy="12" r="3" fill="#e56d10"/><path d="M12 1v6M12 17v6M1 12h6M17 12h6" stroke="#fff" stroke-width="1.200"/></svg>
                    <span class="cr"></span>
                </span>
                <span class="tb-side"><span class="cr"></span></span>
            </div>
            <div class="coords">
                <span class="coords-grip"></span>
                <div class="crow d-flex align-items-center"><span class="clbl">X</span><span class="cval">0.00000</span></div>
                <div class="crow d-flex align-items-center"><span class="clbl">Y</span><span class="cval">54.0000</span></div>
                <div class="crow d-flex align-items-center"><span class="clbl">Z</span><span class="cval">30.0000</span></div>
            </div>
            <div class="wm-a">3D世界网</div>
            <div class="wm-b">WWW.3DSJW.COM</div>
        </div>
    </div>

    <!-- hand-drawn red annotations over everything -->
    <svg class="notes-layer" width="1341" height="968" viewBox="0 0 1341 968">
        <rect x="4" y="532.500" width="380" height="152" rx="2" fill="none" stroke="#f4261c" stroke-width="2"/>
        <polygon points="402,367 270,604 274,606 257,614 256,594 261,597 400,366" fill="#f4261c"/>
        <polygon points="433,802 320,780 200,759 64,728 59,733 45,720 58,714 62,719 200,750 320,775 434,801" fill="#f4261c"/>
        <polygon points="569,698 556,696 558,693 547,681 561,690 564,686" fill="#f4261c"/>
        <polygon points="589,719 603,718 601,722 628,736 598,726 598,733" fill="#f4261c"/>
    </svg>
    <div class="note note-a">此处选择几何体颜色即可</div>
    <div class="note note-b">勾选刺选项会出现这个蓝色的边边</div>
</div>
<script src="https://cdn.jsdelivr.net/npm/bootstrap@5.3.0/dist/js/bootstrap.bundle.min.js"></script>
</body>
</html>
